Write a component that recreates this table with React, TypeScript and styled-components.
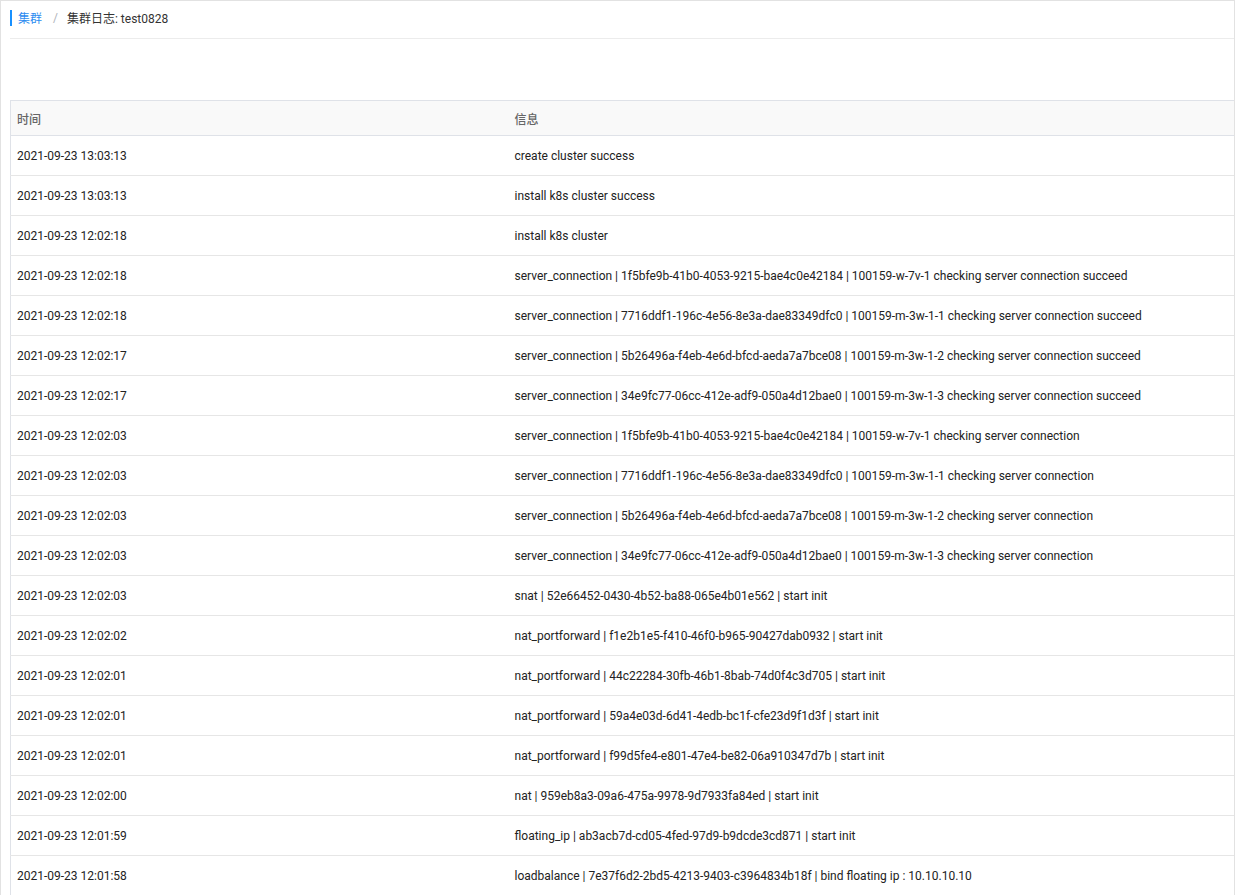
import React from "react";
import styled, { createGlobalStyle } from "styled-components";

const GlobalStyle = createGlobalStyle`
  html, body { margin: 0; padding: 0; background: #fff; }
  body {
    font-family: "Roboto", "Noto Sans CJK SC", sans-serif;
    font-size: 12px;
    color: #333;
  }
  * { box-sizing: border-box; }
`;

const Page = styled.div`
  border: 1px solid #e2e2e2;
  border-bottom: none;
  min-height: 100vh;
  padding-left: 9px;
`;

const Header = styled.div`
  display: flex;
  align-items: center;
  height: 38px;
  border-bottom: 1px solid #ececec;
  padding-bottom: 4px;
`;

const Bar = styled.span`
  width: 2px;
  height: 16px;
  background: #1890ff;
  margin-right: 6px;
`;

const Crumb = styled.span<{ $link?: boolean }>`
  color: ${(p) => (p.$link ? "#2d8cf0" : "#333")};
  font-size: 12px;
`;

const Sep = styled.span`
  color: #b0b4bb;
  margin: 0 9px 0 11px;
`;

const Table = styled.table`
  margin-top: 61px;
  width: 100%;
  border-collapse: collapse;
  border: 1px solid #dfe2e8;
  border-right: none;
  table-layout: fixed;
`;

const Th = styled.th<{ $w?: number }>`
  ${(p) => (p.$w ? `width: ${p.$w}px;` : "")}
  height: 35px;
  background: #f9f9f9;
  color: #666;
  font-weight: 500;
  text-align: left;
  padding: 1px 6px 0;
  border-bottom: 1px solid #dfe2e8;
  font-size: 12px;
`;

const Td = styled.td`
  height: 40px;
  padding: 1px 6px 0;
  border-bottom: 1px solid #e6e6e6;
  color: #222;
  white-space: nowrap;
`;

const rows: [string, string][] = [
  ["2021-09-23 13:03:13", "create cluster success"],
  ["2021-09-23 13:03:13", "install k8s cluster success"],
  ["2021-09-23 12:02:18", "install k8s cluster"],
  ["2021-09-23 12:02:18", "server_connection | 1f5bfe9b-41b0-4053-9215-bae4c0e42184 | 100159-w-7v-1 checking server connection succeed"],
  ["2021-09-23 12:02:18", "server_connection | 7716ddf1-196c-4e56-8e3a-dae83349dfc0 | 100159-m-3w-1-1 checking server connection succeed"],
  ["2021-09-23 12:02:17", "server_connection | 5b26496a-f4eb-4e6d-bfcd-aeda7a7bce08 | 100159-m-3w-1-2 checking server connection succeed"],
  ["2021-09-23 12:02:17", "server_connection | 34e9fc77-06cc-412e-adf9-050a4d12bae0 | 100159-m-3w-1-3 checking server connection succeed"],
  ["2021-09-23 12:02:03", "server_connection | 1f5bfe9b-41b0-4053-9215-bae4c0e42184 | 100159-w-7v-1 checking server connection"],
  ["2021-09-23 12:02:03", "server_connection | 7716ddf1-196c-4e56-8e3a-dae83349dfc0 | 100159-m-3w-1-1 checking server connection"],
  ["2021-09-23 12:02:03", "server_connection | 5b26496a-f4eb-4e6d-bfcd-aeda7a7bce08 | 100159-m-3w-1-2 checking server connection"],
  ["2021-09-23 12:02:03", "server_connection | 34e9fc77-06cc-412e-adf9-050a4d12bae0 | 100159-m-3w-1-3 checking server connection"],
  ["2021-09-23 12:02:03", "snat | 52e66452-0430-4b52-ba88-065e4b01e562 | start init"],
  ["2021-09-23 12:02:02", "nat_portforward | f1e2b1e5-f410-46f0-b965-90427dab0932 | start init"],
  ["2021-09-23 12:02:01", "nat_portforward | 44c22284-30fb-46b1-8bab-74d0f4c3d705 | start init"],
  ["2021-09-23 12:02:01", "nat_portforward | 59a4e03d-6d41-4edb-bc1f-cfe23d9f1d3f | start init"],
  ["2021-09-23 12:02:01", "nat_portforward | f99d5fe4-e801-47e4-be82-06a910347d7b | start init"],
  ["2021-09-23 12:02:00", "nat | 959eb8a3-09a6-475a-9978-9d7933fa84ed | start init"],
  ["2021-09-23 12:01:59", "floating_ip | ab3acb7d-cd05-4fed-97d9-b9dcde3cd871 | start init"],
  ["2021-09-23 12:01:58", "loadbalance | 7e37f6d2-2bd5-4213-9403-c3964834b18f | bind floating ip : 10.10.10.10"],
];

export default function App() {
  return (
    <>
      <GlobalStyle />
      <Page>
        <Header>
          <Bar />
          <Crumb $link>集群</Crumb>
          <Sep>/</Sep>
          <Crumb>集群日志: test0828</Crumb>
        </Header>
        <Table>
          <thead>
            <tr>
              <Th $w={498}>时间</Th>
              <Th>信息</Th>
            </tr>
          </thead>
          <tbody>
            {rows.map(([t, m], i) => (
              <tr key={i}>
                <Td>{t}</Td>
                <Td>{m}</Td>
              </tr>
            ))}
          </tbody>
        </Table>
      </Page>
    </>
  );
}
